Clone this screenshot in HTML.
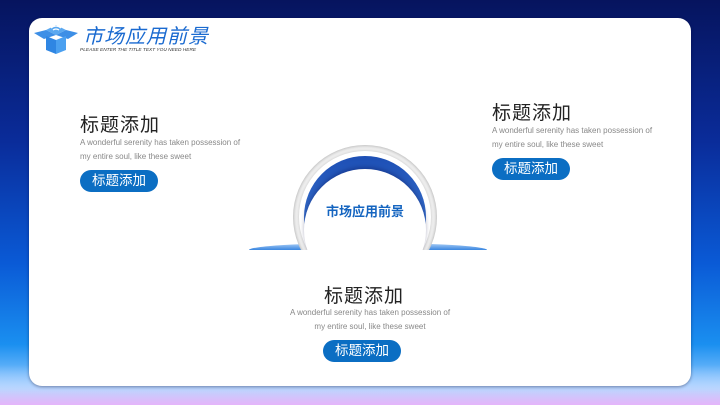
<!DOCTYPE html>
<html><head><meta charset="utf-8"><style>
*{margin:0;padding:0;box-sizing:border-box}
body{width:720px;height:405px;overflow:hidden;position:relative;font-family:"Liberation Sans","Noto Sans CJK SC",sans-serif;
background:linear-gradient(180deg,#06145e 0%,#0a2c9a 35%,#0a5ad6 65%,#1a8ff0 85%,#8fc8ff 95%,#d0b8f5 100%);}
.glow{position:absolute;left:0;right:0;bottom:0;height:40px;background:linear-gradient(180deg,rgba(120,200,255,0) 0%,rgba(200,220,255,.7) 60%,rgba(230,180,250,.9) 100%)}
.card{position:absolute;left:29px;top:18px;width:662px;height:368px;background:#fff;border-radius:13px;box-shadow:0 1px 3px rgba(0,0,40,.4)}
.t{position:absolute;font-size:19px;color:#222;letter-spacing:1px;white-space:nowrap}
.p{position:absolute;font-size:8px;color:#888;line-height:14px;white-space:nowrap}
.b{position:absolute;width:78px;height:22px;border-radius:11px;background:#0b6ec3;color:#fff;font-size:13.5px;text-align:center;line-height:22px}
</style></head><body>
<div class="glow"></div>
<div class="card"></div>
<svg style="position:absolute;left:32px;top:20px" width="48" height="36" viewBox="0 0 48 36">
<polygon points="14,10 24,5 34,10 24,15" fill="#5aa8f0"/>
<polygon points="2,13 14,10 24,15 12,19" fill="#3d8fe6"/>
<polygon points="46,13 34,10 24,15 36,19" fill="#3d8fe6"/>
<polygon points="14,16 24,20 24,34 14,30" fill="#2f86e3"/>
<polygon points="34,16 24,20 24,34 34,30" fill="#4ba0f0"/>
<path d="M19 8 Q24 4 29 8 M21 10 Q24 8 27 10" stroke="#fff" stroke-width="1.2" fill="none"/>
</svg>
<div style="position:absolute;left:83px;top:20px;font-size:20px;font-style:italic;color:#1a6ad0;letter-spacing:1px">市场应用前景</div>
<div style="position:absolute;left:80px;top:48px;font-size:4.8px;font-style:italic;color:#333">PLEASE ENTER THE TITLE TEXT YOU NEED HERE</div>

<div class="t" style="left:80px;top:110px">标题添加</div>
<div class="p" style="left:80px;top:136px">A wonderful serenity has taken possession of<br>my entire soul, like these sweet</div>
<div class="b" style="left:80px;top:170px">标题添加</div>

<div class="t" style="left:492px;top:98px">标题添加</div>
<div class="p" style="left:492px;top:124px">A wonderful serenity has taken possession of<br>my entire soul, like these sweet</div>
<div class="b" style="left:492px;top:158px">标题添加</div>

<div class="t" style="left:324px;top:281px">标题添加</div>
<div class="p" style="left:287px;top:306px;text-align:center;width:166px">A wonderful serenity has taken possession of<br>my entire soul, like these sweet</div>
<div class="b" style="left:323px;top:340px">标题添加</div>

<div style="position:absolute;left:249px;top:243px;width:238px;height:7px;border-radius:50% 50% 0 0/100% 100% 0 0;background:linear-gradient(180deg,#b0d2f7,#3a86e0)"></div>
<div style="position:absolute;left:240px;top:250px;width:260px;height:8px;background:#fff"></div>
<div style="position:absolute;left:293px;top:145px;width:144px;height:105px;overflow:hidden">
 <div style="position:absolute;left:0;top:0;width:144px;height:144px;border-radius:50%;background:#fafafa;box-shadow:inset 0 0 5px rgba(0,0,0,.4)"></div>
 <div style="position:absolute;left:6px;top:6px;width:132px;height:132px;border-radius:50%;background:#fff;box-shadow:0 0 4px rgba(0,0,0,.25)"></div>
 <div style="position:absolute;left:11px;top:11px;width:122px;height:122px;border-radius:50%;background:linear-gradient(180deg,#1d4fb5,#4a86dc)"></div>
 <div style="position:absolute;left:11px;top:24px;width:122px;height:122px;border-radius:50%;background:#fff;box-shadow:0 -2px 4px rgba(0,0,60,.3)"></div>
</div>
<div style="position:absolute;left:293px;top:201px;width:144px;text-align:center;font-size:13px;font-weight:bold;color:#1565c0">市场应用前景</div>
</body></html>
